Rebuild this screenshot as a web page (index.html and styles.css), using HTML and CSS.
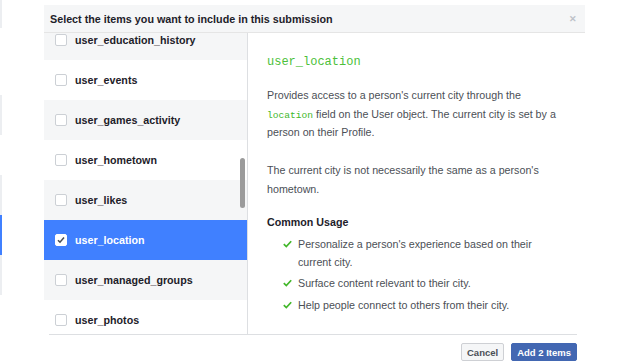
FILE: index.html
```html
<!DOCTYPE html>
<html lang="en">
<head>
    <meta charset="UTF-8">
    <title>Select items</title>
    <link rel="stylesheet" href="styles.css">
</head>
<body>
    <div class="edge">
        <span class="seg" style="height: 28px"></span>
        <span class="gap" style="height: 67px"></span>
        <span class="seg" style="height: 40px"></span>
        <span class="gap" style="height: 40px"></span>
        <span class="seg" style="height: 40px"></span>
        <span class="seg blue" style="height: 40px"></span>
        <span class="seg" style="height: 40px"></span>
    </div>

    <div class="dialog">
        <div class="dialog-header">
            <h2>Select the items you want to include in this submission</h2>
            <span class="close">&#x2715;</span>
        </div>

        <div class="dialog-body">
            <div class="item-list">
                <ul>
                    <li class="odd"><span class="box"></span>user_education_history</li>
                    <li><span class="box"></span>user_events</li>
                    <li class="odd"><span class="box"></span>user_games_activity</li>
                    <li><span class="box"></span>user_hometown</li>
                    <li class="odd"><span class="box"></span>user_likes</li>
                    <li class="selected">
                        <span class="box checked">
                            <svg width="8" height="8" viewBox="0 0 8 8"><path d="M1 4.2 L3 6.2 L7 1.6" fill="none" stroke="#4b4f56" stroke-width="1.6"/></svg>
                        </span>user_location
                    </li>
                    <li class="odd"><span class="box"></span>user_managed_groups</li>
                    <li><span class="box"></span>user_photos</li>
                </ul>
                <div class="scrollbar"></div>
            </div>

            <div class="detail">
                <h3 class="perm-name">user_location</h3>
                <p>Provides access to a person's current city through the <code>location</code> field on the User object. The current city is set by a person on their Profile.</p>
                <p>The current city is not necessarily the same as a person's hometown.</p>
                <h4>Common Usage</h4>
                <ul class="usage">
                    <li><svg class="tick" width="9" height="8" viewBox="0 0 9 8"><path d="M0.8 4.2 L3.3 6.6 L8.2 1.2" fill="none" stroke="#42b72a" stroke-width="1.7"/></svg>Personalize a person's experience based on their current city.</li>
                    <li><svg class="tick" width="9" height="8" viewBox="0 0 9 8"><path d="M0.8 4.2 L3.3 6.6 L8.2 1.2" fill="none" stroke="#42b72a" stroke-width="1.7"/></svg>Surface content relevant to their city.</li>
                    <li><svg class="tick" width="9" height="8" viewBox="0 0 9 8"><path d="M0.8 4.2 L3.3 6.6 L8.2 1.2" fill="none" stroke="#42b72a" stroke-width="1.7"/></svg>Help people connect to others from their city.</li>
                </ul>
            </div>
        </div>

        <div class="dialog-footer">
            <button class="btn">Cancel</button>
            <button class="btn primary">Add 2 Items</button>
        </div>
    </div>
</body>
</html>
```

FILE: styles.css
```css
body {
    font-family: 'Liberation Sans', Arial, sans-serif;
    margin: 0;
    padding: 0;
    background: #fff;
    color: #1d2129;
    display: flex;
    align-items: flex-start;
}

/* faint strip of the page behind the dialog */
.edge {
    width: 2px;
    display: flex;
    flex-direction: column;
}

.edge .seg {
    display: block;
    background: #eceef1;
}

.edge .gap {
    display: block;
}

.edge .seg.blue {
    background: #4080ff;
}

/* Dialog */
.dialog {
    margin: 5px 0 0 42px;
    width: 541px;
}

.dialog-header {
    height: 27px;
    background: #f5f6f7;
    border-bottom: 1px solid #e5e5e5;
    display: flex;
    align-items: center;
    justify-content: space-between;
    padding: 0 8px 0 6px;
}

.dialog-header h2 {
    margin: 0;
    font-size: 10.75px;
    font-weight: 700;
    color: #1d2129;
}

.close {
    color: #bec2c9;
    font-size: 9px;
    font-weight: 700;
}

.dialog-body {
    display: flex;
    height: 301px;
}

/* Item list */
.item-list {
    position: relative;
    width: 203px;
    overflow: hidden;
    border-right: 1px solid #dddfe2;
}

.item-list ul {
    list-style: none;
    margin: -13px 0 0;
    padding: 0;
}

.item-list li {
    height: 40px;
    display: flex;
    align-items: center;
    padding-left: 11px;
    font-size: 10.7px;
    font-weight: 700;
    color: #1d2129;
    background: #fff;
}

.item-list li.odd {
    background: #f5f6f7;
}

.item-list li.selected {
    background: #4080ff;
    color: #fff;
}

.box {
    width: 10px;
    height: 10px;
    border: 1px solid #ccd0d5;
    border-radius: 2px;
    background: #fff;
    margin-right: 8px;
    display: flex;
    align-items: center;
    justify-content: center;
}

.box.checked {
    border-color: #fff;
}

.scrollbar {
    position: absolute;
    top: 125px;
    right: 2px;
    width: 5px;
    height: 50px;
    border-radius: 3px;
    background: #9b9b9b;
}

/* Detail panel */
.detail {
    flex: 1;
    padding: 20px 20px 0 19px;
    color: #4b4f56;
    font-size: 10.7px;
    line-height: 18.5px;
}

.perm-name {
    margin: 0 0 15px;
    font-family: 'Liberation Mono', 'Courier New', monospace;
    font-size: 12px;
    font-weight: 400;
    line-height: 18px;
    color: #4cbf3a;
}

.detail p {
    margin: 0 0 19.5px;
    max-width: 300px;
}

.detail p + p {
    margin-bottom: 14.5px;
}

.detail code {
    font-family: 'Liberation Mono', 'Courier New', monospace;
    font-size: 9.6px;
    line-height: 1;
    color: #42b72a;
}

.detail h4 {
    margin: 0 0 4px;
    font-size: 10.7px;
    line-height: 18px;
    font-weight: 700;
    color: #1d2129;
}

.usage {
    list-style: none;
    margin: 0;
    padding: 0 0 0 16px;
}

.usage li {
    position: relative;
    padding-left: 15px;
    line-height: 18px;
    margin-bottom: 3.5px;
    max-width: 260px;
}

.tick {
    position: absolute;
    left: 0;
    top: 5px;
}

/* Footer */
.dialog-footer {
    margin: 0 8px 0 5px;
    border-top: 1px solid #dddfe2;
    padding-top: 8px;
    display: flex;
    justify-content: flex-end;
    gap: 7px;
}

.btn {
    font-family: 'Liberation Sans', Arial, sans-serif;
    font-size: 9.5px;
    font-weight: 700;
    height: 18px;
    padding: 0 5px;
    border: 1px solid #ced0d4;
    border-radius: 2px;
    background: #f5f6f7;
    color: #4b4f56;
}

.btn.primary {
    background: #4267b2;
    border-color: #4267b2;
    color: #fff;
}
```
